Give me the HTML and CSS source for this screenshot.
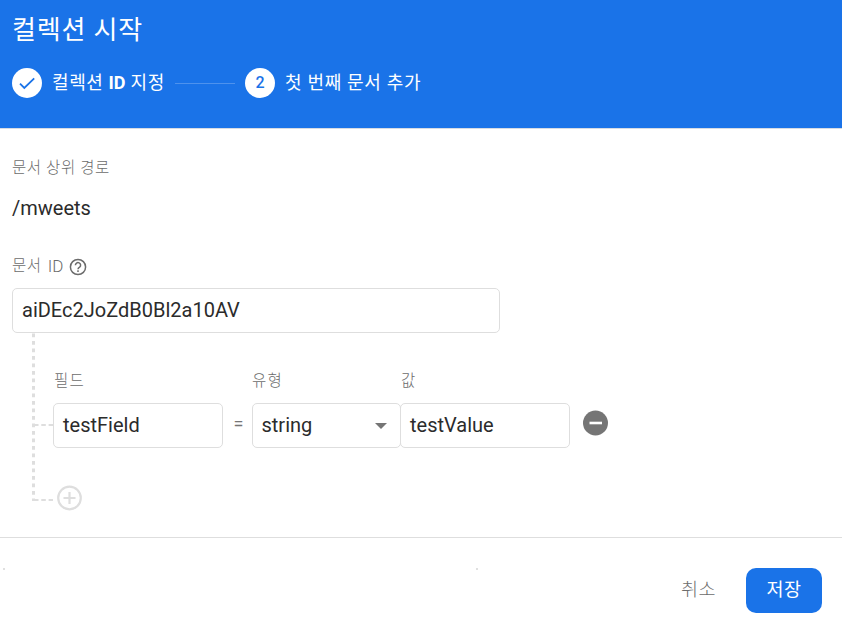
FILE: index.html
```html
<!DOCTYPE html>
<html lang="ko">
<head>
<meta charset="utf-8">
<title>컬렉션 시작</title>
<link rel="stylesheet" href="styles.css">
</head>
<body>
<main class="dialog">
  <header class="header">
    <h1 class="title">컬렉션 시작</h1>
    <div class="steps">
      <span class="badge"><svg width="30" height="30" viewBox="0 0 30 30"><path d="M8 15.7l4.3 4.2L22.2 10.4" fill="none" stroke="#1a73e8" stroke-width="1.8"/></svg></span>
      <span class="step-label first">컬렉션 <b>ID</b> 지정</span>
      <span class="connector"></span>
      <span class="badge">2</span>
      <span class="step-label second">첫 번째 문서 추가</span>
    </div>
  </header>
  <section class="content">
    <div class="label">문서 상위 경로</div>
    <div class="path">/mweets</div>
    <div class="label id-label">문서 <span class="latin">ID</span>
      <svg width="18" height="18" viewBox="0 0 18 18" fill="none" stroke="#6b6b6b" stroke-width="1.5"><circle cx="9" cy="9" r="7.6"/><path d="M6.4 7.2a2.6 2.5 0 1 1 4.2 1.9Q9 10.1 9 11.2"/><path d="M9 12.3v1.7"/></svg>
    </div>
    <div class="input id-input">aiDEc2JoZdB0Bl2a10AV</div>
    <div class="tree">
      <svg class="lines" width="24" height="170" viewBox="0 0 24 170" fill="none" stroke="#dedede"><path d="M1.5 .5V168" stroke-width="3" stroke-dasharray="3.8 3.7"/><path d="M2 92H21M2 167H21" stroke-width="2" stroke-dasharray="4.5 2.8"/></svg>
      <div class="fields">
        <div class="label">필드</div><div></div><div class="label">유형</div><div class="label">값</div><div></div>
        <div class="input">testField</div>
        <div class="equals">=</div>
        <div class="input select">string<svg width="14" height="8" viewBox="0 0 14 8"><path d="M1 1h12L7 7z" fill="#757575"/></svg></div>
        <div class="input value">testValue</div>
        <svg class="remove" width="26" height="26" viewBox="0 0 26 26"><circle cx="12.5" cy="13" r="12.5" fill="#757575"/><path d="M6.5 13h12.5" stroke="#fff" stroke-width="2.6"/></svg>
      </div>
      <svg class="add" width="26" height="26" viewBox="0 0 26 26" fill="none" stroke="#dedede" stroke-width="2.2"><circle cx="13.5" cy="13" r="11.3"/><path d="M7.5 13h12M13.5 7v12"/></svg>
    </div>
  </section>
  <footer class="footer">
    <span class="speck"></span>
    <span class="speck"></span>
    <span class="cancel">취소</span>
    <span class="save">저장</span>
  </footer>
</main>
</body>
</html>
```
FILE: styles.css
```css
* { box-sizing: border-box; }
body { margin: 0; background: #fff; font-family: Roboto, "Noto Sans CJK KR", sans-serif; color: #2b2b2b; }
svg { display: block; flex: none; }
.dialog { width: 842px; height: 625px; display: flex; flex-direction: column; overflow: hidden; }
.header { height: 129px; padding: 11px 13px 0 12px; background: #1a73e8; color: #fff; border-bottom: 1px solid #d5dbe4; }
.title { margin: 0; font-size: 26px; line-height: 38px; font-weight: 400; letter-spacing: .8px; white-space: nowrap; }
.steps { display: flex; align-items: center; margin-top: 19px; height: 30px; white-space: nowrap; }
.badge { width: 30px; height: 30px; flex: none; border-radius: 50%; background: #fff; color: #1a73e8; font-size: 16px; font-weight: 500; line-height: 30px; text-align: center; }
.step-label { font-size: 18px; line-height: 30px; margin-left: 10px; letter-spacing: .7px; }
.first { width: 113px; letter-spacing: .6px; }
.first b { font-weight: 700; letter-spacing: 0; }
.connector { width: 60px; height: 1px; margin: 0 10px; background: #4e92ed; }
.content { height: 408px; padding: 27px 12px 0; }
.label { font-size: 15.5px; line-height: 24px; font-weight: 300; letter-spacing: .6px; color: #6c6c6c; white-space: nowrap; }
.path { margin-top: 15px; font-size: 20px; line-height: 26px; }
.id-label { display: flex; align-items: center; margin-top: 33px; }
.id-label .latin { margin-left: 6px; font-size: 17px; letter-spacing: 0; }
.id-label svg { margin: 1px 0 0 6px; }
.input { height: 45px; border: 1px solid #dedede; border-radius: 5px; padding: 0 9px; font-size: 20px; line-height: 43px; }
.id-input { width: 488px; margin-top: 10px; }
.tree { position: relative; padding: 36px 0 0 41px; }
.lines { position: absolute; left: 20px; top: 0; }
.fields { display: grid; grid-template-columns: 170px 29px 149px 169px 38px; row-gap: 10px; }
.fields .label:first-child { padding-left: 1px; }
.fields .label { letter-spacing: 1.2px; }
.fields .value { margin-left: -1px; width: 170px; }
.equals { font-size: 18px; line-height: 41px; color: #757575; text-align: center; padding-left: 2px; }
.select { display: flex; align-items: center; justify-content: space-between; padding: 0 12px 0 8.5px; }
.remove { margin: 7px 0 0 13px; }
.add { margin: 37px 0 0 3px; }
.footer { height: 88px; border-top: 1px solid #dedede; padding: 30px 20px 0 3px; display: flex; font-size: 18.5px; line-height: 45px; letter-spacing: .5px; }
.speck { width: 2px; height: 2px; margin-right: 471px; background: #e0e0e0; }
.speck + .speck { margin-right: auto; }
.cancel { color: #6c6c6c; margin-right: 30px; font-weight: 300; }
.save { width: 76px; height: 45px; border-radius: 10px; background: #1a73e8; color: #fff; text-align: center; }
```
